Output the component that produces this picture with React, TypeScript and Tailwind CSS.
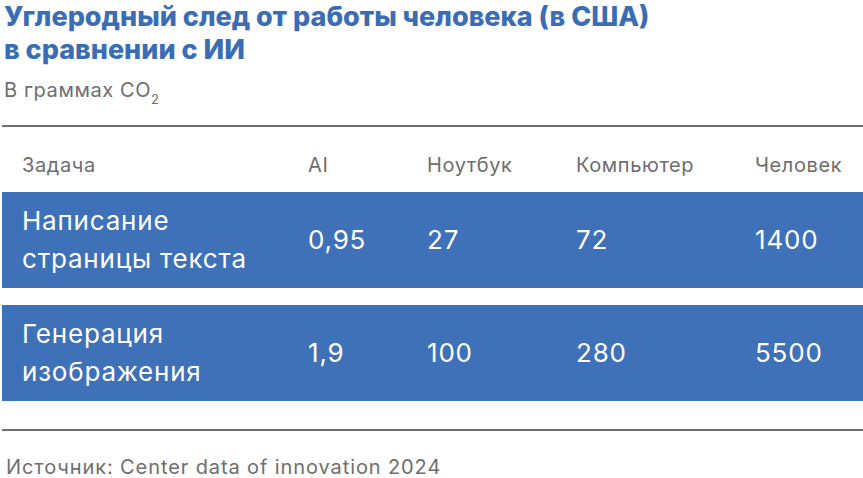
import React from "react";

const rows = [
  { task: ["Написание", "страницы текста"], ai: "0,95", laptop: "27", pc: "72", human: "1400" },
  { task: ["Генерация", "изображения"], ai: "1,9", laptop: "100", pc: "280", human: "5500" },
];

const grid = "grid grid-cols-[286px_119px_149px_179px_1fr] pl-[20px]";

export default function App() {
  return (
    <div className="w-[863px] h-[478px] bg-white pl-[2px] font-['Inter',sans-serif] overflow-hidden">
      <h1 className="pl-[2px] text-[27px] leading-[33px] font-extrabold tracking-[0px] text-[#3b6db5]">
        Углеродный след от работы человека (в США)
        <br />в сравнении с ИИ
      </h1>
      <div className="pl-[2px] mt-[12px] text-[20px] leading-[24px] tracking-[0.6px] text-[#6e6e6e]">
        В граммах CO<sub className="text-[13px] align-[-4px]">2</sub>
      </div>
      <div className="mt-[23px] h-[2px] bg-[#6f6f6f]" />
      <div className={`${grid} h-[65px] pt-[26px] text-[20px] leading-[24px] tracking-[0.6px] text-[#6e6e6e]`}>
        <div>Задача</div>
        <div>AI</div>
        <div>Ноутбук</div>
        <div>Компьютер</div>
        <div>Человек</div>
      </div>
      <div className="flex flex-col gap-[17px]">
        {rows.map((r) => (
          <div key={r.ai} className={`${grid} h-[96px] items-center bg-[#3e71b8] text-white text-[26px] leading-[38px] tracking-[0.8px]`}>
            <div>
              {r.task[0]}
              <br />
              {r.task[1]}
            </div>
            <div>{r.ai}</div>
            <div>{r.laptop}</div>
            <div>{r.pc}</div>
            <div>{r.human}</div>
          </div>
        ))}
      </div>
      <div className="mt-[28px] h-[2px] bg-[#6f6f6f]" />
      <div className="pl-[4px] mt-[24px] text-[20px] leading-[24px] tracking-[0.9px] text-[#6e6e6e]">
        Источник: Center data of innovation 2024
      </div>
    </div>
  );
}
